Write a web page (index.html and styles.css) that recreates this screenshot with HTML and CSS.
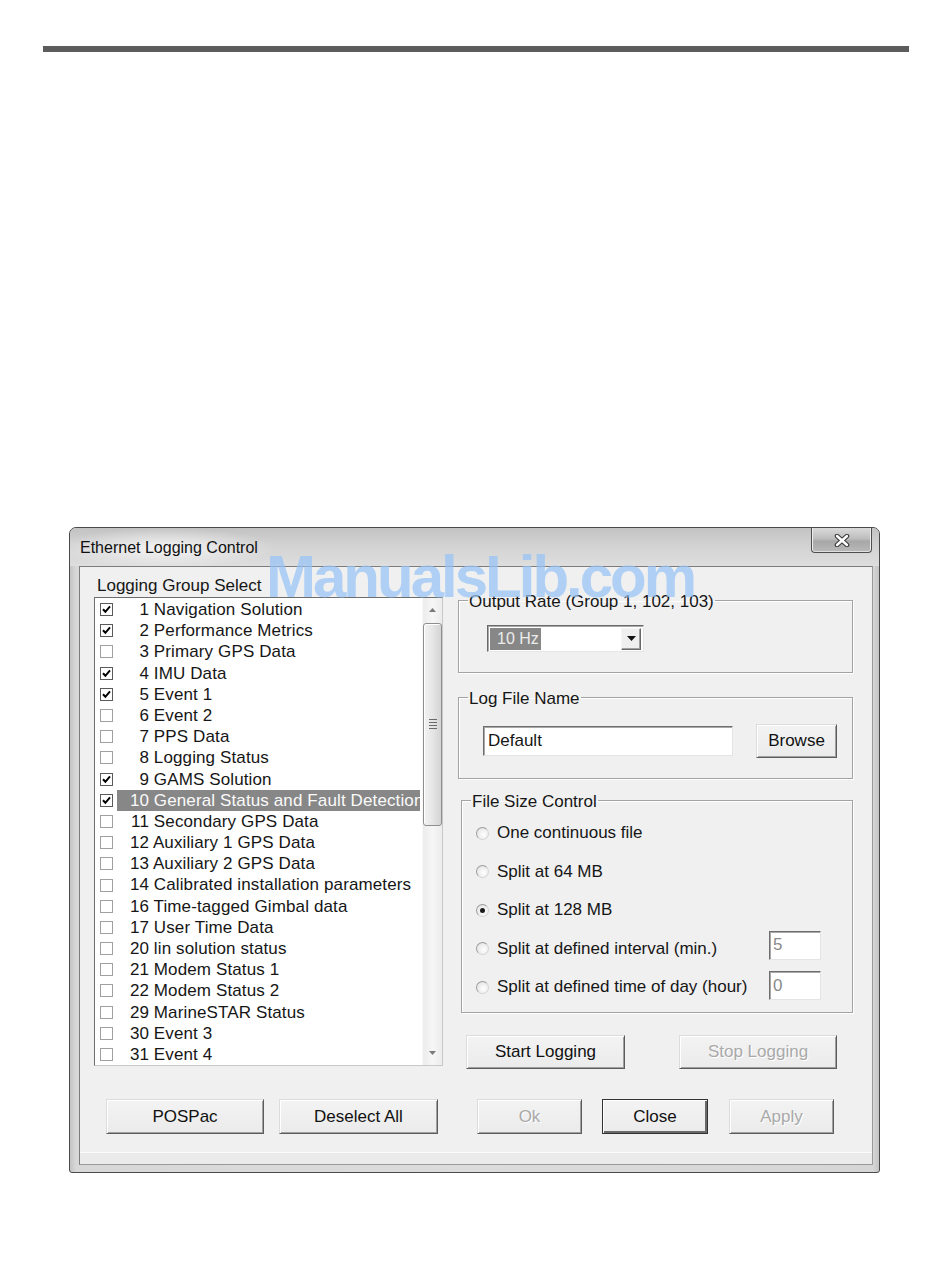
FILE: index.html
```html
<!DOCTYPE html>
<html>
<head>
<meta charset="utf-8">
<link rel="stylesheet" href="styles.css">
</head>
<body>
<div class="rule"></div>
<div class="dialog">
  <div class="titlebar">
    <span class="title">Ethernet Logging Control</span>
    <div class="closebtn">
      <svg width="16" height="13" viewBox="0 0 16 13"><path d="M3 2 L13 11 M13 2 L3 11" stroke="#3a3a3a" stroke-width="4.6" stroke-linecap="round"/><path d="M3 2 L13 11 M13 2 L3 11" stroke="#fff" stroke-width="2.4" stroke-linecap="round"/></svg>
    </div>
  </div>
  <div class="client">
    <div class="main">
      <div class="left">
        <div class="lbl">Logging Group Select</div>
        <div class="listbox">
          <div class="items">
            <div class="row"><span class="cb on"><svg viewBox="0 0 11 11" width="11" height="11"><path d="M2 5.2 L4.4 7.8 L9 2.4" fill="none" stroke="#000" stroke-width="2"/></svg></span><span class="lab"><span class="num">1</span> Navigation Solution</span></div>
            <div class="row"><span class="cb on"><svg viewBox="0 0 11 11" width="11" height="11"><path d="M2 5.2 L4.4 7.8 L9 2.4" fill="none" stroke="#000" stroke-width="2"/></svg></span><span class="lab"><span class="num">2</span> Performance Metrics</span></div>
            <div class="row"><span class="cb"></span><span class="lab"><span class="num">3</span> Primary GPS Data</span></div>
            <div class="row"><span class="cb on"><svg viewBox="0 0 11 11" width="11" height="11"><path d="M2 5.2 L4.4 7.8 L9 2.4" fill="none" stroke="#000" stroke-width="2"/></svg></span><span class="lab"><span class="num">4</span> IMU Data</span></div>
            <div class="row"><span class="cb on"><svg viewBox="0 0 11 11" width="11" height="11"><path d="M2 5.2 L4.4 7.8 L9 2.4" fill="none" stroke="#000" stroke-width="2"/></svg></span><span class="lab"><span class="num">5</span> Event 1</span></div>
            <div class="row"><span class="cb"></span><span class="lab"><span class="num">6</span> Event 2</span></div>
            <div class="row"><span class="cb"></span><span class="lab"><span class="num">7</span> PPS Data</span></div>
            <div class="row"><span class="cb"></span><span class="lab"><span class="num">8</span> Logging Status</span></div>
            <div class="row"><span class="cb on"><svg viewBox="0 0 11 11" width="11" height="11"><path d="M2 5.2 L4.4 7.8 L9 2.4" fill="none" stroke="#000" stroke-width="2"/></svg></span><span class="lab"><span class="num">9</span> GAMS Solution</span></div>
            <div class="row"><span class="cb on"><svg viewBox="0 0 11 11" width="11" height="11"><path d="M2 5.2 L4.4 7.8 L9 2.4" fill="none" stroke="#000" stroke-width="2"/></svg></span><span class="lab sel"><span class="num">10</span> General Status and Fault Detection</span></div>
            <div class="row"><span class="cb"></span><span class="lab"><span class="num">11</span> Secondary GPS Data</span></div>
            <div class="row"><span class="cb"></span><span class="lab"><span class="num">12</span> Auxiliary 1 GPS Data</span></div>
            <div class="row"><span class="cb"></span><span class="lab"><span class="num">13</span> Auxiliary 2 GPS Data</span></div>
            <div class="row"><span class="cb"></span><span class="lab"><span class="num">14</span> Calibrated installation parameters</span></div>
            <div class="row"><span class="cb"></span><span class="lab"><span class="num">16</span> Time-tagged Gimbal data</span></div>
            <div class="row"><span class="cb"></span><span class="lab"><span class="num">17</span> User Time Data</span></div>
            <div class="row"><span class="cb"></span><span class="lab"><span class="num">20</span> lin solution status</span></div>
            <div class="row"><span class="cb"></span><span class="lab"><span class="num">21</span> Modem Status 1</span></div>
            <div class="row"><span class="cb"></span><span class="lab"><span class="num">22</span> Modem Status 2</span></div>
            <div class="row"><span class="cb"></span><span class="lab"><span class="num">29</span> MarineSTAR Status</span></div>
            <div class="row"><span class="cb"></span><span class="lab"><span class="num">30</span> Event 3</span></div>
            <div class="row"><span class="cb"></span><span class="lab"><span class="num">31</span> Event 4</span></div>
          </div>
          <div class="scrollbar">
            <div class="sb-btn"><svg width="7" height="4" viewBox="0 0 7 4"><path d="M0 4 L3.5 0 L7 4 Z" fill="#7a7a7a"/></svg></div>
            <div class="thumb"><svg width="8" height="11" viewBox="0 0 8 11"><path d="M0 0.5 H8 M0 3.5 H8 M0 6.5 H8 M0 9.5 H8" stroke="#6a6a6a" stroke-width="1.2"/></svg></div>
            <div class="sb-space"></div>
            <div class="sb-btn"><svg width="7" height="4" viewBox="0 0 7 4"><path d="M0 0 L3.5 4 L7 0 Z" fill="#7a7a7a"/></svg></div>
          </div>
        </div>
      </div>
      <div class="right">
        <fieldset class="fs fs1">
          <legend>Output Rate (Group 1, 102, 103)</legend>
          <div class="combo">
            <span class="combo-sel">10 Hz</span>
            <span class="ddbtn"><svg width="9" height="5" viewBox="0 0 9 5"><path d="M0 0 L4.5 5 L9 0 Z" fill="#111"/></svg></span>
          </div>
        </fieldset>
        <fieldset class="fs fs2">
          <legend>Log File Name</legend>
          <div class="fnrow">
            <div class="tin fname">Default</div>
            <div class="btn browse">Browse</div>
          </div>
        </fieldset>
        <fieldset class="fs fs3">
          <legend>File Size Control</legend>
          <div class="radios">
            <div class="rrow"><span class="radio"></span><span class="rlab">One continuous file</span></div>
            <div class="rrow"><span class="radio"></span><span class="rlab">Split at 64 MB</span></div>
            <div class="rrow"><span class="radio on"></span><span class="rlab">Split at 128 MB</span></div>
            <div class="rrow"><span class="radio"></span><span class="rlab">Split at defined interval (min.)</span><div class="tin small up7">5</div></div>
            <div class="rrow"><span class="radio"></span><span class="rlab">Split at defined time of day (hour)</span><div class="tin small up3">0</div></div>
          </div>
        </fieldset>
        <div class="logbtns">
          <div class="btn start">Start Logging</div>
          <div class="btn dis stop">Stop Logging</div>
        </div>
      </div>
    </div>
    <div class="bottom">
      <div class="btn pospac">POSPac</div>
      <div class="btn deselect">Deselect All</div>
      <div class="btn dis ok">Ok</div>
      <div class="btn def close">Close</div>
      <div class="btn dis apply">Apply</div>
    </div>
    <div class="band"></div>
  </div>
</div>
<div class="watermark">ManualsLib.com</div>
</body>
</html>
```
FILE: styles.css
```css
* { box-sizing: border-box; }
html, body { margin: 0; padding: 0; background: #fff; }
body {
  font-family: "Liberation Sans", Arial, sans-serif;
  font-size: 17px;
  color: #161616;
  position: relative;
  width: 950px;
  height: 1267px;
  overflow: hidden;
}
.rule {
  margin: 46px 0 0 43px;
  width: 866px;
  height: 6px;
  background: #5c5c5c;
}
.dialog {
  margin: 475px 0 0 69px;
  width: 811px;
  height: 646px;
  border: 1px solid #4a4a4a;
  border-radius: 7px 7px 3px 3px;
  background: linear-gradient(90deg, #c4c4c4, #d8d8d8 6px, #dcdcdc 50%, #d6d6d6 calc(100% - 6px), #c4c4c4);
  display: flex;
  flex-direction: column;
  padding: 0 6px 7px 9px;
}
.titlebar {
  margin: 0 -6px 0 -9px;
  height: 38px;
  display: flex;
  justify-content: space-between;
  align-items: flex-start;
  padding: 0 7px 0 10px;
  border-radius: 6px 6px 0 0;
  background:
    radial-gradient(ellipse 110px 20px at 95px 20px, rgba(255,255,255,0.75), rgba(255,255,255,0)),
    linear-gradient(#c3c3c3, #d2d2d2 45%, #dedede);
}
.title {
  font-size: 16px;
  line-height: 40px;
  color: #111;
}
.closebtn {
  width: 61px;
  height: 25px;
  border: 1px solid #4e4e4e;
  border-top: none;
  border-radius: 0 0 4px 4px;
  background: linear-gradient(#dadada, #bdbdbd 45%, #a7a7a7 55%, #b9b9b9);
  box-shadow: inset 1px 0 #eee, inset -1px 0 #eee, inset 0 -1px #e0e0e0;
  display: flex;
  align-items: center;
  justify-content: center;
}
.client {
  flex: 1;
  border: 1px solid;
  border-color: #7c7c7c #9a9a9a #9a9a9a #7c7c7c;
  background: #f0f0f0;
  display: flex;
  flex-direction: column;
}
.main {
  display: flex;
  padding-left: 14px;
}
.left { width: 349px; }
.lbl {
  padding: 8px 0 0 3px;
  line-height: 22px;
  height: 30px;
}
.listbox {
  height: 469px;
  border: 1px solid;
  border-color: #6e6e6e #c8c8c8 #c8c8c8 #6e6e6e;
  background: #fff;
  display: flex;
}
.items {
  width: 327px;
  padding-top: 1px;
  overflow: hidden;
}
.row {
  height: 21.2px;
  display: flex;
  align-items: center;
}
.cb {
  width: 13px;
  height: 13px;
  margin-left: 5px;
  border: 1px solid #a0a0a0;
  background: #fff;
  display: flex;
  align-items: center;
  justify-content: center;
  flex: none;
}
.cb.on { border-color: #5a5a5a; }
.lab {
  margin: 0 2px 0 4px;
  flex: 1;
  min-width: 0;
  padding-left: 13px;
  height: 21.2px;
  line-height: 21px;
  white-space: nowrap;
  overflow: hidden;
  letter-spacing: 0.12px;
}
.lab.sel { background: #878787; color: #fafafa; }
.num { display: inline-block; width: 19px; text-align: right; }
.scrollbar {
  width: 20px;
  background: linear-gradient(90deg, #ececec, #f6f6f6 50%, #ececec);
  border-left: 1px solid #f8f8f8;
  display: flex;
  flex-direction: column;
}
.sb-btn {
  height: 24px;
  display: flex;
  align-items: center;
  justify-content: center;
}
.thumb {
  margin-top: 1px;
  height: 203px;
  border: 1px solid #8f8f8f;
  border-radius: 3px;
  background: linear-gradient(90deg, #f2f2f2, #e6e6e6 50%, #d4d4d4);
  box-shadow: inset 1px 1px #fff;
  display: flex;
  align-items: center;
  justify-content: center;
}
.sb-space { flex: 1; }
.right {
  width: 395px;
  margin-left: 15px;
}
.fs {
  margin: 0;
  padding: 0 0 0 9px;
  border: 1px solid #a3a3a3;
  box-shadow: inset 1px 1px #fff, 1px 1px #fff;
  min-width: 0;
}
.fs legend {
  padding: 3px 1px 0;
  line-height: 18px;
  font-size: 17px;
}
.fs1 { margin-top: 23px; padding-bottom: 20px; }
.fs2 { margin-top: 14px; padding-bottom: 20px; }
.fs3 { margin-top: 11px; margin-left: 3px; width: 392px; padding-bottom: 10px; }
.combo {
  margin: 14px 0 0 19px;
  width: 157px;
  height: 27px;
  border: 1px solid;
  border-color: #6a6a6a #e6e6e6 #e6e6e6 #6a6a6a;
  box-shadow: inset 1px 1px #a8a8a8;
  background: #fff;
  display: flex;
  align-items: center;
  padding: 0 2px 0 2px;
}
.combo-sel {
  background: #878787;
  color: #ececec;
  width: 51px;
  height: 22px;
  line-height: 22px;
  padding-left: 7px;
  font-size: 16px;
}
.ddbtn {
  margin-left: auto;
  width: 20px;
  height: 22px;
  background: #efefef;
  border: 1px solid;
  border-color: #f4f4f4 #6a6a6a #6a6a6a #f4f4f4;
  box-shadow: inset -1px -1px #a0a0a0;
  display: flex;
  align-items: center;
  justify-content: center;
}
.fnrow {
  margin: 16px 0 0 15px;
  display: flex;
  align-items: center;
  height: 34px;
}
.tin {
  border: 1px solid;
  border-color: #6e6e6e #e4e4e4 #e4e4e4 #6e6e6e;
  box-shadow: inset 1px 1px #a8a8a8;
  background: #fff;
  padding-left: 4px;
  display: flex;
  align-items: center;
  font-size: 17px;
}
.fname { width: 250px; height: 30px; }
.browse { margin-left: 23px; width: 81px; height: 34px; }
.radios { padding-top: 7px; }
.rrow {
  height: 30px;
  display: flex;
  align-items: center;
  margin-bottom: 8.5px;
}
.rrow:last-child { margin-bottom: 0; }
.radio {
  width: 13px;
  height: 13px;
  margin-left: 5px;
  border-radius: 50%;
  border: 1px solid #9c9c9c;
  border-right-color: #d4d4d4;
  border-bottom-color: #d4d4d4;
  background: radial-gradient(circle at 60% 60%, #fff, #e8e8e8 70%);
  flex: none;
  position: relative;
}
.radio.on::after {
  content: "";
  position: absolute;
  left: 3px;
  top: 3px;
  width: 5px;
  height: 5px;
  border-radius: 50%;
  background: #1a1a1a;
}
.rlab { margin-left: 8px; }
.small {
  margin-left: auto;
  margin-right: 31px;
  width: 52px;
  height: 29px;
  color: #8a8a8a;
  padding-left: 3px;
}
.up7 { margin-bottom: 7px; }
.up3 { margin-bottom: 3px; }
.logbtns {
  margin-top: 22px;
  display: flex;
}
.btn {
  display: flex;
  align-items: center;
  justify-content: center;
  background: linear-gradient(#f3f3f3, #ebebeb);
  border: 1px solid;
  border-color: #dcdcdc #5c5c5c #5c5c5c #dcdcdc;
  box-shadow: inset 1px 1px #fff, inset -1px -1px #a0a0a0;
  font-size: 17px;
  color: #111;
  flex: none;
}
.btn.dis { color: #a9a9a9; text-shadow: 1px 1px #fff; }
.btn.def {
  border-color: #333;
  box-shadow: inset 1px 1px #fff, inset -2px -2px #6a6a6a;
}
.start { margin-left: 8px; width: 159px; height: 34px; }
.stop { margin-left: 54px; width: 158px; height: 34px; }
.bottom {
  margin-top: 30px;
  display: flex;
  height: 35px;
}
.bottom .btn { height: 35px; }
.pospac { margin-left: 26px; width: 158px; }
.deselect { margin-left: 15px; width: 159px; }
.ok { margin-left: 39px; width: 105px; }
.close { margin-left: 20px; width: 106px; }
.apply { margin-left: 21px; width: 105px; }
.band {
  margin-top: auto;
  height: 12px;
  border-top: 1px solid #fbfbfb;
  background: #ebebeb;
}
.watermark {
  position: absolute;
  left: 266px;
  top: 547px;
  font-family: "Liberation Sans", Arial, sans-serif;
  font-weight: bold;
  font-size: 60px;
  line-height: 60px;
  letter-spacing: -3px;
  color: rgba(150, 195, 245, 0.72);
  white-space: nowrap;
}
```
